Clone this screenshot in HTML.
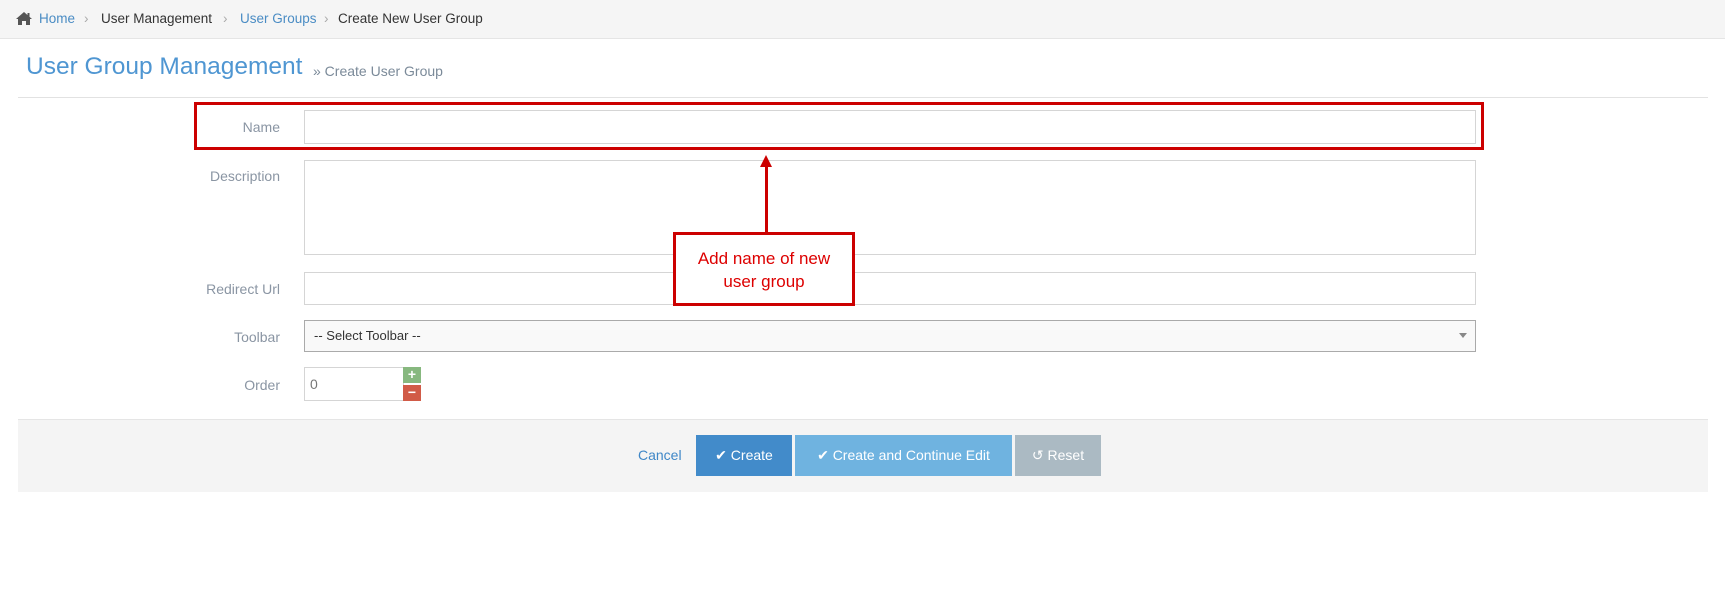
<!DOCTYPE html>
<html><head><style>
*{margin:0;padding:0;box-sizing:border-box}
body{width:1725px;height:605px;background:#fff;font-family:"Liberation Sans",sans-serif;position:relative;overflow:hidden}
.a{position:absolute}
.bc{left:0;top:0;width:1725px;height:39px;background:#f5f5f5;border-bottom:1px solid #e5e5e5;font-size:13.5px;color:#333}
.bc span{position:absolute;top:11px}
.lbl{font-size:14px;color:#8a95a3;text-align:right;width:150px;left:130px}
.inp{border:1px solid #d5d5d5;background:#fff}
.btn{color:#fff;font-size:14px;text-align:center;line-height:41px;top:435px;height:41px}
</style></head><body>
<div class="a bc">
<svg class="a" style="left:15px;top:11px" width="18" height="15" viewBox="0 0 18 15"><path d="M9 1 L1 8 L3 8 L3 14 L7 14 L7 10 L11 10 L11 14 L15 14 L15 8 L17 8 Z" fill="#555"/><rect x="12.5" y="2" width="2" height="4" fill="#555"/></svg>
<span style="left:39px;color:#4a8cc4">Home</span>
<span style="left:84px;color:#aaa">›</span>
<span style="left:101px">User Management</span>
<span style="left:223px;color:#aaa">›</span>
<span style="left:240px;color:#4a8cc4">User Groups</span>
<span style="left:324px;color:#aaa">›</span>
<span style="left:338px">Create New User Group</span>
</div>
<div class="a" style="left:26px;top:53px;font-size:24.5px;color:#4f96d2">User Group Management</div>
<div class="a" style="left:313px;top:63px;font-size:14px;color:#7b8a99">» Create User Group</div>
<div class="a" style="left:18px;top:97px;width:1690px;height:1px;background:#e2e2e2"></div>

<div class="a lbl" style="top:119px">Name</div>
<div class="a inp" style="left:304px;top:110px;width:1172px;height:34px"></div>
<div class="a lbl" style="top:168px">Description</div>
<div class="a inp" style="left:304px;top:160px;width:1172px;height:95px"></div>
<div class="a lbl" style="top:281px">Redirect Url</div>
<div class="a inp" style="left:304px;top:272px;width:1172px;height:33px"></div>
<div class="a lbl" style="top:329px">Toolbar</div>
<div class="a" style="left:304px;top:320px;width:1172px;height:32px;background:#f9f9f9;border:1px solid #aaa;font-size:13px;color:#333;padding:7px 9px">-- Select Toolbar --</div>
<div class="a" style="left:1459px;top:333px;width:0;height:0;border-left:4px solid transparent;border-right:4px solid transparent;border-top:5px solid #888"></div>
<div class="a lbl" style="top:377px">Order</div>
<div class="a inp" style="left:304px;top:367px;width:100px;height:34px;font-size:14px;color:#777;padding:8px 5px">0</div>
<div class="a" style="left:403px;top:367px;width:18px;height:16px;background:#87b87f;color:#fff;font-size:14px;font-weight:bold;text-align:center;line-height:15px">+</div>
<div class="a" style="left:403px;top:385px;width:18px;height:16px;background:#d15b47;color:#fff;font-size:14px;font-weight:bold;text-align:center;line-height:15px">−</div>

<div class="a" style="left:18px;top:419px;width:1690px;height:73px;background:#f4f4f4;border-top:1px solid #e5e5e5"></div>
<div class="a" style="left:638px;top:447px;font-size:14px;color:#3f87c7">Cancel</div>
<div class="a btn" style="left:696px;width:96px;background:#428bca">✔ Create</div>
<div class="a btn" style="left:795px;width:217px;background:#6fb3e0">✔ Create and Continue Edit</div>
<div class="a btn" style="left:1015px;width:86px;background:#abbac3">↺ Reset</div>

<div class="a" style="left:194px;top:102px;width:1290px;height:48px;border:3px solid #c00"></div>
<div class="a" style="left:765px;top:162px;width:3px;height:71px;background:#c00"></div>
<div class="a" style="left:760px;top:155px;width:0;height:0;border-left:6px solid transparent;border-right:6px solid transparent;border-bottom:12px solid #c00"></div>
<div class="a" style="left:673px;top:232px;width:182px;height:74px;border:3px solid #c00;background:#fff;color:#d00;font-size:17px;text-align:center;line-height:23px;padding-top:12px">Add name of new<br>user group</div>
</body></html>
